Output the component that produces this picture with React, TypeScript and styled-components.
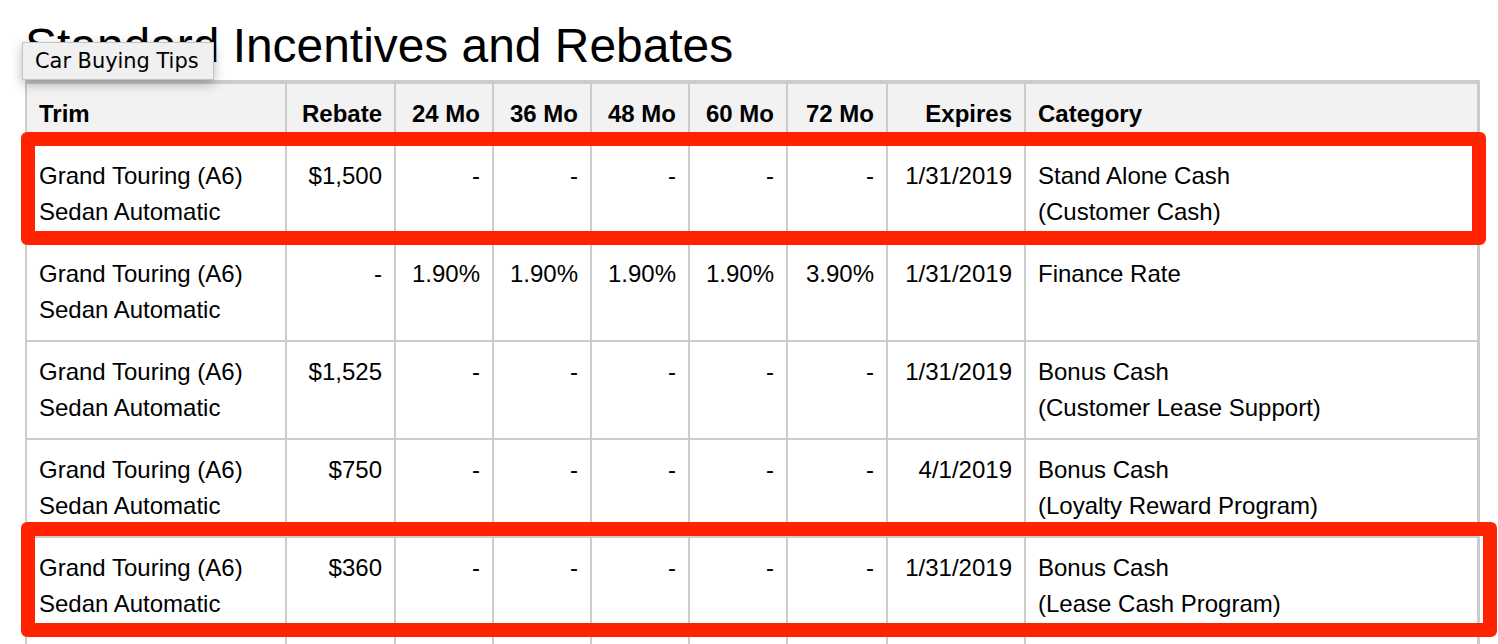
import React from "react";
import styled, { createGlobalStyle } from "styled-components";

const GlobalStyle = createGlobalStyle`
  html, body {
    margin: 0;
    padding: 0;
    background: #ffffff;
    overflow: hidden;
  }
  body {
    font-family: "Liberation Sans", Arial, Helvetica, sans-serif;
    color: #000;
  }
`;

const Page = styled.div`
  position: relative;
  width: 1498px;
  height: 644px;
  overflow: hidden;
  padding-left: 25px;
  box-sizing: border-box;
`;

const Title = styled.h1`
  margin: 21px 0 9px;
  font-family: "Liberation Sans", Arial, sans-serif;
  font-weight: 400;
  font-size: 47.9px;
  line-height: 50px;
  color: #000;
  white-space: nowrap;
`;

const Table = styled.table`
  width: 1455px;
  table-layout: fixed;
  border-collapse: separate;
  border-spacing: 0;
  border-top: 4px solid #cccccc;
  border-left: 2px solid #cccccc;
  border-right: 3px solid #cccccc;
  font-size: 24px;
  line-height: 36px;
`;

const HeadCell = styled.th<{ $align?: "left" | "right"; $last?: boolean }>`
  background: #f2f2f2;
  font-weight: 700;
  text-align: ${(p) => p.$align ?? "right"};
  padding: 12px 12px;
  border-right: ${(p) => (p.$last ? "none" : "2px solid #cccccc")};
  border-bottom: 2px solid #cccccc;
  white-space: nowrap;
  vertical-align: top;
`;

const Cell = styled.td<{ $align?: "left" | "right"; $last?: boolean }>`
  text-align: ${(p) => p.$align ?? "right"};
  padding: 12px 12px;
  height: 72px;
  border-right: ${(p) => (p.$last ? "none" : "2px solid #cccccc")};
  border-bottom: 2px solid #cccccc;
  vertical-align: top;
  white-space: nowrap;
`;

const Tooltip = styled.div`
  position: absolute;
  left: 22px;
  top: 42px;
  width: 192px;
  height: 38px;
  box-sizing: border-box;
  background: #f0f0f0;
  border: 1px solid #c4c4c4;
  box-shadow: 0 4px 12px rgba(0, 0, 0, 0.28);
  font-family: "DejaVu Sans", "Liberation Sans", sans-serif;
  font-size: 20.9px;
  line-height: 36px;
  padding-left: 12px;
  color: #000;
  white-space: nowrap;
`;

const Highlight = styled.div<{ $x: number; $y: number; $w: number; $h: number }>`
  position: absolute;
  left: ${(p) => p.$x}px;
  top: ${(p) => p.$y}px;
  width: ${(p) => p.$w}px;
  height: ${(p) => p.$h}px;
  box-sizing: border-box;
  border: 14px solid #ff2300;
  border-radius: 6px;
  pointer-events: none;
`;

type Row = {
  rebate: string;
  rates: string[];
  expires: string;
  category: string;
  sub?: string;
};

const dash = ["-", "-", "-", "-", "-"];

const rows: Row[] = [
  { rebate: "$1,500", rates: dash, expires: "1/31/2019", category: "Stand Alone Cash", sub: "(Customer Cash)" },
  { rebate: "-", rates: ["1.90%", "1.90%", "1.90%", "1.90%", "3.90%"], expires: "1/31/2019", category: "Finance Rate" },
  { rebate: "$1,525", rates: dash, expires: "1/31/2019", category: "Bonus Cash", sub: "(Customer Lease Support)" },
  { rebate: "$750", rates: dash, expires: "4/1/2019", category: "Bonus Cash", sub: "(Loyalty Reward Program)" },
  { rebate: "$360", rates: dash, expires: "1/31/2019", category: "Bonus Cash", sub: "(Lease Cash Program)" },
  { rebate: "$500", rates: dash, expires: "1/31/2019", category: "Bonus Cash", sub: "(Customer Cash)" },
];

const widths = [260, 109, 98, 98, 98, 98, 100, 138, 451];

export default function App() {
  return (
    <>
      <GlobalStyle />
      <Page>
        <Title>Standard Incentives and Rebates</Title>
        <Table>
          <colgroup>
            {widths.map((w, i) => (
              <col key={i} style={{ width: w }} />
            ))}
          </colgroup>
          <thead>
            <tr>
              <HeadCell $align="left">Trim</HeadCell>
              <HeadCell>Rebate</HeadCell>
              <HeadCell>24 Mo</HeadCell>
              <HeadCell>36 Mo</HeadCell>
              <HeadCell>48 Mo</HeadCell>
              <HeadCell>60 Mo</HeadCell>
              <HeadCell>72 Mo</HeadCell>
              <HeadCell>Expires</HeadCell>
              <HeadCell $align="left" $last>
                Category
              </HeadCell>
            </tr>
          </thead>
          <tbody>
            {rows.map((r, i) => (
              <tr key={i}>
                <Cell $align="left">
                  Grand Touring (A6)
                  <br />
                  Sedan Automatic
                </Cell>
                <Cell>{r.rebate}</Cell>
                {r.rates.map((rate, j) => (
                  <Cell key={j}>{rate}</Cell>
                ))}
                <Cell>{r.expires}</Cell>
                <Cell $align="left" $last>
                  {r.category}
                  {r.sub && (
                    <>
                      <br />
                      {r.sub}
                    </>
                  )}
                </Cell>
              </tr>
            ))}
          </tbody>
        </Table>
        <Tooltip>Car Buying Tips</Tooltip>
        <Highlight $x={21} $y={132} $w={1465} $h={113} />
        <Highlight $x={21} $y={522} $w={1476} $h={115} />
      </Page>
    </>
  );
}
